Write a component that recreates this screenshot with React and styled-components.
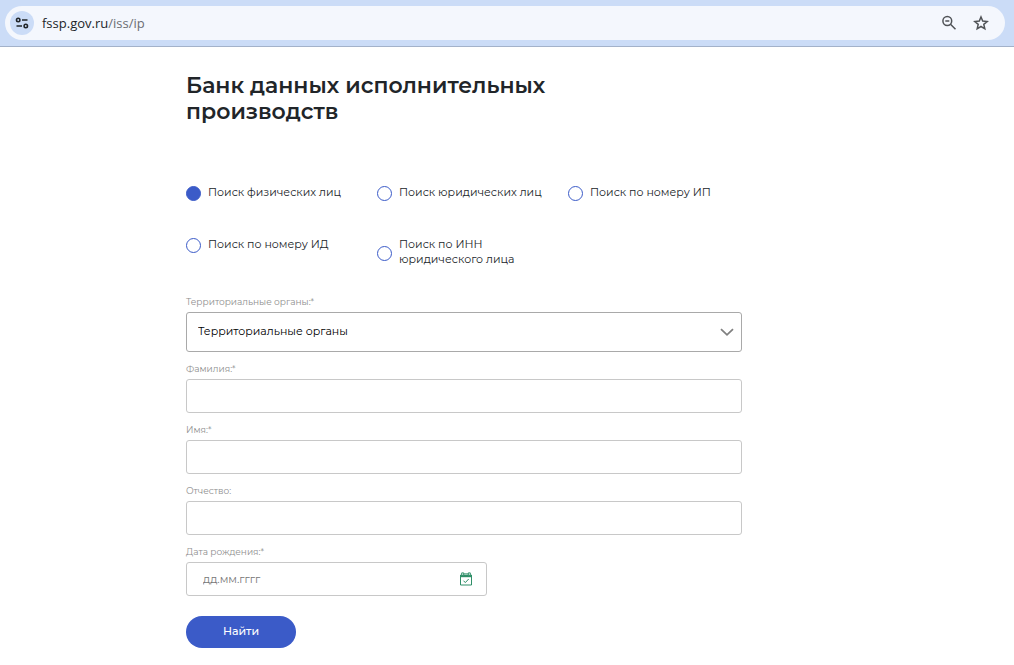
import React, { useState } from 'react'
import styled, { createGlobalStyle } from 'styled-components'

const BLUE = '#3b5bc8'
const TEXT = '#212529'
const MUTED = '#8e8e8e'
const BORDER = '#c8c8c8'
const SITE_FONT = "Montserrat, Inter, 'Noto Sans', sans-serif"

const GlobalStyle = createGlobalStyle`
  *, *::before, *::after {
    box-sizing: border-box;
  }

  body {
    margin: 0;
    background: #fff;
    color: ${TEXT};
    font-family: ${SITE_FONT};
  }
`

const StyledBrowserBar = styled('header')`
  display: flex;
  padding: 6px 9px 6px 5px;
  background: #cbdcf7;
  border-bottom: 1px solid #a3b2ca;
`

const StyledAddress = styled('div')`
  display: flex;
  align-items: center;
  flex: 1;
  height: 34px;
  padding: 0 12px 0 5px;
  border-radius: 17px;
  background: #f4f7fd;
`

const StyledIconButton = styled('button')`
  display: flex;
  align-items: center;
  justify-content: center;
  width: 24px;
  height: 24px;
  padding: 0;
  border: 0;
  border-radius: 50%;
  background: ${({ $filled }) => ($filled ? '#cbdcf7' : 'transparent')};
  color: ${({ $filled }) => ($filled ? TEXT : '#505357')};
`

const StyledUrl = styled('div')`
  flex: 1;
  padding-left: 8px;
  color: #6b6e73;
  font-family: 'Open Sans', 'Noto Sans', sans-serif;
  font-size: 13px;
  line-height: 20px;

  span {
    color: ${TEXT};
  }
`

const StyledActions = styled('div')`
  display: flex;
  gap: 8px;
`

const StyledMain = styled('main')`
  max-width: 742px;
  padding: 26px 0 16px 186px;
`

const StyledHeading = styled('h1')`
  max-width: 400px;
  margin: 0 0 60px;
  font-size: 22px;
  font-weight: 600;
  line-height: 26px;
`

const StyledRadioGroup = styled('fieldset')`
  display: grid;
  grid-template-columns: repeat(auto-fill, 170px);
  align-items: start;
  gap: 37px 21px;
  margin: 0 0 29px;
  padding: 0;
  border: 0;
`

const StyledRadioLabel = styled('label')`
  display: flex;
  align-items: center;
  gap: 7px;
  font-size: 11px;
  line-height: 15px;
`

const StyledRadio = styled('input')`
  appearance: none;
  flex: none;
  width: 15px;
  height: 15px;
  margin: 1px 0 -1px;
  border: 1px solid ${BLUE};
  border-radius: 50%;
  background: #fff;

  &:checked {
    background: ${BLUE};
  }
`

const StyledField = styled('div')`
  display: flex;
  flex-direction: column;
  gap: 4px;
  margin-bottom: 11px;
`

const StyledLabel = styled('label')`
  color: ${MUTED};
  font-size: 9px;
  line-height: 12px;
`

const StyledControl = styled('div')`
  display: flex;
  align-items: center;
  width: 100%;
  max-width: ${({ $narrow }) => ($narrow ? '301px' : 'none')};
  height: ${({ $tall }) => ($tall ? 40 : 34)}px;
  padding-right: ${({ $narrow }) => ($narrow ? 13 : 7)}px;
  border: 1px solid ${({ $tall }) => ($tall ? '#a9a9a9' : BORDER)};
  border-radius: 3px;
`

const StyledInput = styled('input')`
  flex: 1;
  min-width: 0;
  height: 100%;
  padding: 0 16px;
  border: 0;
  outline: 0;
  background: transparent;
  color: ${TEXT};
  font-family: inherit;
  font-size: 11px;

  &::placeholder {
    color: #757575;
  }
`

const StyledSelect = styled('select')`
  appearance: none;
  flex: 1;
  min-width: 0;
  height: 100%;
  padding: 0 11px 2px;
  border: 0;
  outline: 0;
  background: transparent;
  color: #000;
  font-family: inherit;
  font-size: 11px;
`

const StyledSubmit = styled('button')`
  width: 110px;
  height: 32px;
  margin-top: 9px;
  padding: 0 0 2px;
  border: 0;
  border-radius: 16px;
  background: ${BLUE};
  color: #fff;
  font-family: inherit;
  font-size: 11px;
  font-weight: 500;
`

const SEARCH_TYPES = [
  'Поиск физических лиц',
  'Поиск юридических лиц',
  'Поиск по номеру ИП',
  'Поиск по номеру ИД',
  'Поиск по ИНН юридического лица',
]

function TuneIcon () {
  return (
    <svg width="14" height="14" viewBox="0 0 14 14" fill="none" stroke="currentColor" strokeWidth="1.6">
      <circle cx="3.2" cy="4" r="1.7" />
      <path d="M7 4h5.5M1.5 10H7" />
      <circle cx="10.8" cy="10" r="1.7" />
    </svg>
  )
}

function ZoomOutIcon () {
  return (
    <svg width="16" height="16" viewBox="0 0 16 16" fill="none" stroke="currentColor" strokeWidth="1.5">
      <circle cx="6.3" cy="6" r="4.4" />
      <path d="M4.3 6h4M9.5 9.2l5 5" />
    </svg>
  )
}

function StarIcon () {
  return (
    <svg width="16" height="16" viewBox="0 0 16 16" fill="none" stroke="currentColor" strokeWidth="1.5">
      <path d="M8 2l1.7 4.1 4.5.4-3.4 2.9 1 4.4L8 11.5l-3.8 2.3 1-4.4-3.4-2.9 4.5-.4z" />
    </svg>
  )
}

function ChevronIcon () {
  return (
    <svg width="14" height="10" viewBox="0 0 14 10" fill="none" stroke="#808080" strokeWidth="1.8">
      <path d="M1 2.2l6 5.6 6-5.6" />
    </svg>
  )
}

function CalendarIcon () {
  return (
    <svg width="14" height="14" viewBox="0 0 14 14" fill="none" stroke="#2f8f68">
      <path d="M1.5 3.5h11v9.5h-11z" />
      <path d="M1 4h12" strokeWidth="2.4" />
      <path d="M2.7.9h2v2.4h-2zM9.3.9h2v2.4h-2z" fill="#fff" />
      <path d="M5 1.9h4" />
      <path d="M4.5 8.7l1.8 1.9 3.4-3.6" />
    </svg>
  )
}

function BrowserBar () {
  return (
    <StyledBrowserBar>
      <StyledAddress>
        <StyledIconButton $filled type="button" aria-label="Сведения о сайте">
          <TuneIcon />
        </StyledIconButton>
        <StyledUrl><span>fssp.gov.ru</span>/iss/ip</StyledUrl>
        <StyledActions>
          <StyledIconButton type="button" aria-label="Масштаб">
            <ZoomOutIcon />
          </StyledIconButton>
          <StyledIconButton type="button" aria-label="Добавить в закладки">
            <StarIcon />
          </StyledIconButton>
        </StyledActions>
      </StyledAddress>
    </StyledBrowserBar>
  )
}

function TextField ({ id, label }) {
  return (
    <StyledField>
      <StyledLabel htmlFor={id}>{label}</StyledLabel>
      <StyledControl>
        <StyledInput id={id} name={id} type="text" />
      </StyledControl>
    </StyledField>
  )
}

function App () {
  const [searchType, setSearchType] = useState(SEARCH_TYPES[0])

  return (
    <>
      <GlobalStyle />
      <BrowserBar />
      <StyledMain>
        <StyledHeading>Банк данных исполнительных производств</StyledHeading>
        <form onSubmit={(event) => event.preventDefault()}>
          <StyledRadioGroup aria-label="Тип поиска">
            {SEARCH_TYPES.map((type) => (
              <StyledRadioLabel key={type}>
                <StyledRadio
                  type="radio"
                  name="searchType"
                  value={type}
                  checked={searchType === type}
                  onChange={() => setSearchType(type)}
                />
                {type}
              </StyledRadioLabel>
            ))}
          </StyledRadioGroup>
          <StyledField>
            <StyledLabel htmlFor="region">Территориальные органы:*</StyledLabel>
            <StyledControl $tall>
              <StyledSelect id="region" name="region">
                <option>Территориальные органы</option>
              </StyledSelect>
              <ChevronIcon />
            </StyledControl>
          </StyledField>
          <TextField id="lastName" label="Фамилия:*" />
          <TextField id="firstName" label="Имя:*" />
          <TextField id="patronymic" label="Отчество:" />
          <StyledField>
            <StyledLabel htmlFor="birthDate">Дата рождения:*</StyledLabel>
            <StyledControl $narrow>
              <StyledInput id="birthDate" name="birthDate" type="text" placeholder="дд.мм.гггг" />
              <CalendarIcon />
            </StyledControl>
          </StyledField>
          <StyledSubmit type="submit">Найти</StyledSubmit>
        </form>
      </StyledMain>
    </>
  )
}

export default App
